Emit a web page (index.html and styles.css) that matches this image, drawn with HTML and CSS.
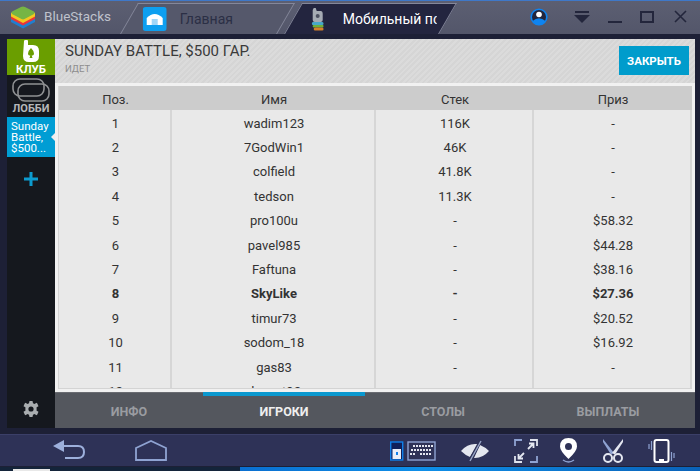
FILE: index.html
```html
<!DOCTYPE html>
<html lang="ru">
<head>
<meta charset="utf-8">
<title>BlueStacks</title>
<link rel="stylesheet" href="styles.css">
</head>
<body>
<div class="window">
  <header class="titlebar">
    <svg class="logo" width="26" height="24" viewBox="0 0 26 24">
      <path d="M1 13 13 19 25 13V17L13 23.500 1 17Z" fill="#1f7fd0"/>
      <path d="M1 10 13 16 25 10V14L13 20.500 1 14Z" fill="#e8353a"/>
      <path d="M1 7.500 13 14 25 7.500V11.500L13 18 1 11.500Z" fill="#f3c81f"/>
      <path d="M13 1.500Q14 1.500 15 2L24 6.500Q25.500 7.500 24 9L14.500 14Q13 14.800 11.500 14L2 9Q.5 7.500 2 6.500L11 2Q12 1.500 13 1.500Z" fill="#76b544"/>
    </svg>
    <span class="brand">BlueStacks</span>
    <div class="tabs">
      <div class="tab">
        <div class="tab-inner">
          <svg class="home-app" width="24" height="24" viewBox="0 0 24 24">
            <rect width="24" height="24" rx="3" fill="#0d9ff0"/>
            <path d="M4 11Q12 3 20 11V18H4Z" fill="#fff"/>
            <rect x="9" y="12" width="6" height="6" fill="#9fd6f8"/>
          </svg>
          <span class="tab-label">Главная</span>
        </div>
      </div>
      <div class="tab tab-active">
        <div class="tab-inner">
          <svg class="game-app" width="12" height="24" viewBox="0 0 12 24">
            <path d="M2 1H4L5 4H9Q11 4 11 7V13Q11 15 9 15H3Q1 15 1 13V3Z" fill="#a5abb3"/>
            <rect x="4" y="7" width="4" height="4" rx="2" fill="#4b5060"/>
            <rect x="0" y="15" width="12" height="3" rx="1.500" fill="#48a8c8"/>
            <rect x="1" y="18" width="11" height="2.500" rx="1" fill="#6fb03c"/>
            <rect x="2" y="20.500" width="10" height="3" rx="1.500" fill="#d5802a"/>
          </svg>
          <span class="tab-label">Мобильный пс</span>
        </div>
      </div>
    </div>
    <div class="window-controls">
      <svg width="18" height="18" viewBox="0 0 18 18">
        <circle cx="9" cy="9" r="7.800" fill="#23263c" stroke="#0f84f0" stroke-width="1.600"/>
        <circle cx="9" cy="6.500" r="2.800" fill="#fff"/>
        <path d="M2.500 13Q9 7.500 15.500 13Q13 17 9 17Q5 17 2.500 13Z" fill="#0f84f0"/>
      </svg>
      <svg class="ctl-menu" width="16" height="12" viewBox="0 0 16 12">
        <rect x="1" width="14" height="2" fill="#23263c"/>
        <path d="M0 4H16L8 12Z" fill="#23263c"/>
      </svg>
      <svg class="ctl-min" width="14" height="14" viewBox="0 0 14 14"><rect y="11" width="14" height="2" fill="#23263c"/></svg>
      <svg class="ctl-max" width="14" height="12" viewBox="0 0 14 12"><rect x="1" y="1" width="12" height="10" fill="none" stroke="#23263c" stroke-width="2"/></svg>
      <svg class="ctl-close" width="13" height="13" viewBox="0 0 13 13"><path d="M1 1 12 12M12 1 1 12" stroke="#23263c" stroke-width="1.600"/></svg>
    </div>
  </header>

  <div class="frame">
    <aside class="sidebar">
      <div class="side-club">
        <svg width="16" height="22" viewBox="0 0 16 22">
          <path d="M1 1Q1 0 2.500 0H4Q5 0 5 1V5H10Q16 5 16 11V16Q16 22 10 22H6Q0 22 0 16Z" fill="#fff"/>
          <path d="M8 8Q11 11 11 13.500Q11 16 8.700 15.500L9.500 18H6.500L7.300 15.500Q5 16 5 13.500Q5 11 8 8Z" fill="#6a9e00"/>
        </svg>
        <span>КЛУБ</span>
      </div>
      <div class="side-lobby">
        <svg width="38" height="24" viewBox="0 0 38 24" fill="none" stroke="#8f9193" stroke-width="1.600">
          <rect x="1" y="1" width="31" height="17" rx="7"/>
          <rect x="6" y="6" width="31" height="17" rx="7"/>
        </svg>
        <span>ЛОББИ</span>
      </div>
      <div class="side-active">Sunday Battle, $500...</div>
      <svg class="side-plus" width="14" height="14" viewBox="0 0 14 14"><path d="M5.500 0H8.500V5.500H14V8.500H8.500V14H5.500V8.500H0V5.500H5.500Z" fill="#0c9bcf"/></svg>
      <svg class="side-gear" width="16" height="16" viewBox="0 0 16 16">
        <path fill-rule="evenodd" fill="#a9adb0" d="M6.500 0H9.500L10 2.200 11.500 2.900 13.500 1.700 14.300 2.500 15.500 5.200 13.600 6.300V9.700L15.500 10.800 14.300 13.500 13.500 14.300 11.500 13.100 10 13.800 9.500 16H6.500L6 13.800 4.500 13.100 2.500 14.300 1.700 13.500 .5 10.800 2.400 9.700V6.300L.5 5.200 1.700 2.500 2.500 1.700 4.500 2.900 6 2.200ZM8 5.400A2.600 2.600 0 1 0 8 10.600 2.600 2.600 0 1 0 8 5.400Z"/>
      </svg>
    </aside>

    <main class="content">
      <div class="content-head">
        <div>
          <h1 class="event-title">SUNDAY BATTLE, $500 ГАР.</h1>
          <div class="event-status">ИДЕТ</div>
        </div>
        <button class="close-btn">ЗАКРЫТЬ</button>
      </div>
      <div class="table-panel">
        <div class="table">
          <div class="row row-head"><div>Поз.</div><div>Имя</div><div>Стек</div><div>Приз</div></div>
          <div class="row"><div>1</div><div>wadim123</div><div>116K</div><div>-</div></div>
          <div class="row"><div>2</div><div>7GodWin1</div><div>46K</div><div>-</div></div>
          <div class="row"><div>3</div><div>colfield</div><div>41.8K</div><div>-</div></div>
          <div class="row"><div>4</div><div>tedson</div><div>11.3K</div><div>-</div></div>
          <div class="row"><div>5</div><div>pro100u</div><div>-</div><div>$58.32</div></div>
          <div class="row"><div>6</div><div>pavel985</div><div>-</div><div>$44.28</div></div>
          <div class="row"><div>7</div><div>Faftuna</div><div>-</div><div>$38.16</div></div>
          <div class="row row-me"><div>8</div><div>SkyLike</div><div>-</div><div>$27.36</div></div>
          <div class="row"><div>9</div><div>timur73</div><div>-</div><div>$20.52</div></div>
          <div class="row"><div>10</div><div>sodom_18</div><div>-</div><div>$16.92</div></div>
          <div class="row"><div>11</div><div>gas83</div><div>-</div><div>-</div></div>
          <div class="row"><div>12</div><div>decent92</div><div>-</div><div>-</div></div>
        </div>
      </div>
      <nav class="bottom-tabs">
        <div class="btab">ИНФО</div>
        <div class="btab btab-active">ИГРОКИ</div>
        <div class="btab">СТОЛЫ</div>
        <div class="btab">ВЫПЛАТЫ</div>
      </nav>
    </main>
  </div>

  <footer class="navbar">
    <svg class="nav-back" width="33" height="22" viewBox="0 0 33 22" fill="none">
      <path d="M0 6 11 0V12Z" fill="#9db0dc"/>
      <path d="M10 6H25Q31 6 31 12T25 18H12" stroke="#9db0dc" stroke-width="2"/>
    </svg>
    <svg class="nav-home" width="32" height="21" viewBox="0 0 32 21" fill="none"><path d="M1 8 16 1 31 8V20H1Z" stroke="#8fa3d2" stroke-width="1.800"/></svg>
    <div class="nav-tools">
      <svg class="tool-kb" width="46" height="20" viewBox="0 0 46 20">
        <rect x=".7" y="1" width="12" height="18" fill="#10205a" stroke="#0f7fe8" stroke-width="1.400"/>
        <rect x="2.500" y="8" width="8.500" height="10" fill="#e8eef8"/>
        <rect x="6" y="11" width="2" height="3" fill="#0f7fe8"/>
        <rect x="18" y="1" width="27" height="18" fill="none" stroke="#8fa3d2" stroke-width="1.400"/>
        <path d="M24 5h20M22 9h21M21 13h6M31 13h12" stroke="#e4e7f0" stroke-width="2.200" stroke-dasharray="2 1" transform="translate(-1 0)"/>
      </svg>
      <svg class="tool-eye" width="28" height="24" viewBox="0 0 28 24">
        <path d="M0 12Q6 5 14 5L17 5 9 18Q4 16 0 12ZM19 6Q24 8 28 12 22 19 14 19H13Z" fill="#e4e7ef"/>
        <path d="M20 1 8 23" stroke="#2e3257" stroke-width="3"/>
        <path d="M20 2 9 22" stroke="#9aa7c8" stroke-width="1.400"/>
      </svg>
      <svg class="tool-full" width="24" height="24" viewBox="0 0 24 24" fill="none">
        <path d="M1 7V1H8M16 23H23V17" stroke="#8fa3d2" stroke-width="1.800"/>
        <path d="M1 17V23H8M16 1H23V7" stroke="#dfe3ee" stroke-width="1.800"/>
        <path d="M14 10 19 5M15 4.500H19.500V9M10 14 5 19M4.500 15V19.500H9" stroke="#e4e7f0" stroke-width="1.800"/>
      </svg>
      <svg class="tool-pin" width="20" height="26" viewBox="0 0 20 26">
        <path fill-rule="evenodd" fill="#fff" d="M9.500 0Q18 0 18 8.500 18 13 9.500 21 1 13 1 8.500 1 0 9.500 0ZM9.500 5A3.500 3.500 0 1 0 9.500 12 3.500 3.500 0 1 0 9.500 5Z"/>
        <path d="M4 22Q9.500 26 15 22" fill="none" stroke="#8fa3d2" stroke-width="1.400"/>
      </svg>
      <svg class="tool-scissors" width="22" height="24" viewBox="0 0 22 24" fill="none">
        <path d="M1 0 12 14 9 15.500 1 3Z" fill="#8fa3d2"/>
        <path d="M21 0 10 14 13 15.500 21 3Z" fill="#e4e7f0"/>
        <circle cx="6" cy="19" r="4" stroke="#e4e7f0" stroke-width="2"/>
        <circle cx="16" cy="19" r="4" stroke="#e4e7f0" stroke-width="2"/>
      </svg>
      <svg class="tool-phone" width="27" height="24" viewBox="0 0 27 24" fill="none">
        <rect x="6.500" y="1" width="14" height="22" rx="2" stroke="#fff" stroke-width="2"/>
        <rect x="11" y="20" width="5" height="2" fill="#fff"/>
        <path d="M3.500 2V11M1 5V10M23.500 13V22M26 14V19" stroke="#8fa3d2" stroke-width="1.200"/>
      </svg>
    </div>
  </footer>
  <div class="taskbar"><div class="task-thumb"></div></div>
</div>
</body>
</html>
```

FILE: styles.css
```css
* { box-sizing: border-box; }

html, body {
  margin: 0;
  height: 100%;
  overflow: hidden;
}

body {
  font-family: Roboto, "Liberation Sans", sans-serif;
  background: #1c1f36;
}

.window {
  display: flex;
  flex-direction: column;
  width: 700px;
  height: 471px;
  background: #1d2036;
}

/* title bar */
.titlebar {
  display: flex;
  align-items: center;
  flex: 0 0 35px;
  padding-left: 10px;
  background: linear-gradient(#5c5f72, #53566a);
  border-top: 1px solid #3f78c8;
  border-bottom: 1px solid #1d2036;
  overflow: hidden;
}

.logo { flex: none; margin-top: -2px; }

.brand {
  margin-left: 8px;
  width: 79px;
  color: #bfc2cc;
  font-size: 13.500px;
  margin-top: -3px;
}

.tabs {
  display: flex;
  align-self: flex-end;
  height: 31px;
  margin-left: 6px;
}

.tab {
  width: 157px;
  height: 31px;
  transform: skewX(-30deg);
  border: 1px solid #84879a;
  border-bottom: 0;
  background: #55586b;
}

.tab-active {
  width: 155px;
  margin-left: 7px;
  background: #23253f;
}

.tab-inner {
  display: flex;
  align-items: center;
  height: 100%;
  padding-left: 13px;
  transform: skewX(30deg);
  overflow: hidden;
}

.tab-active .tab-inner { padding-left: 18px; }

.home-app { flex: none; }
.game-app { flex: none; }

.tab-label {
  margin-left: 13px;
  color: #2b2f45;
  font-size: 14px;
  white-space: nowrap;
}

.tab-active .tab-label {
  margin-left: 19px;
  max-width: 94px;
  overflow: hidden;
  color: #fff;
}

.window-controls {
  display: flex;
  align-items: center;
  margin-left: auto;
  margin-top: -2px;
  padding-right: 13px;
}

.ctl-menu { margin-left: 26px; }
.ctl-min { margin-left: 18px; }
.ctl-max { margin-left: 18px; }
.ctl-close { margin-left: 20px; }

/* main frame */
.frame {
  display: flex;
  flex: 0 0 399px;
  padding: 4px 5px 6px 7px;
}

.sidebar {
  display: flex;
  flex-direction: column;
  align-items: center;
  flex: 0 0 48px;
  background: #15181e;
}

.side-club {
  display: flex;
  flex-direction: column;
  align-items: center;
  justify-content: space-between;
  width: 100%;
  height: 36px;
  padding-top: 1px;
  background: #6a9e00;
  color: #fff;
  font-size: 11.500px;
  font-weight: 700;
  line-height: 12px;
}

.side-lobby {
  display: flex;
  flex-direction: column;
  align-items: center;
  width: 100%;
  height: 42px;
  padding-top: 3px;
  color: #b5b7b9;
  font-size: 11px;
  font-weight: 700;
  line-height: 12px;
}

.side-lobby span { margin-top: 1px; }

.side-active {
  position: relative;
  width: 100%;
  height: 40px;
  padding: 4px 0 0 4px;
  background: #009dd4;
  color: #fff;
  font-size: 11.500px;
  line-height: 11px;
}

.side-active::after {
  content: "";
  position: absolute;
  right: 0;
  top: 16px;
  border: 4px solid transparent;
  border-right-color: #eee;
  border-left: 0;
}

.side-plus { margin-top: 15px; }

.side-gear { margin-top: auto; margin-bottom: 11px; }

.content {
  display: flex;
  flex-direction: column;
  flex: 1;
  min-width: 0;
}

.content-head {
  display: flex;
  align-items: flex-start;
  justify-content: space-between;
  flex: 0 0 44px;
  padding: 4px 6px 0 10px;
  background: repeating-linear-gradient(135deg, #dbdbdb 0 2px, #d5d5d5 2px 4px);
}

.event-title {
  margin: 0;
  color: #3a3a3a;
  font-size: 15px;
  font-weight: 400;
  line-height: 17px;
}

.event-status {
  margin-top: 3px;
  color: #8d8d8d;
  font-size: 9.500px;
  line-height: 11px;
}

.close-btn {
  width: 70px;
  height: 29px;
  margin-top: 3px;
  padding: 0;
  border: 0;
  background: #009ccc;
  color: #fff;
  font-family: inherit;
  font-size: 11.500px;
  font-weight: 700;
}

.table-panel {
  flex: 0 0 309px;
  padding: 3px;
  background: #f1f1f1;
  overflow: hidden;
}

.table {
  height: 303px;
  overflow: hidden;
  border-left: 1px solid #d4d4d4;
  border-bottom: 1px solid #d4d4d4;
  background: #e9e9e9;
}

.row {
  display: grid;
  grid-template-columns: 113px 204px 158px 158px;
  height: 24.400px;
  color: #333;
  font-size: 13px;
  text-align: center;
}

.row > div {
  padding: 3.600px 0 0 2px;
  line-height: 20.800px;
  border-right: 2px solid #d6d6d6;
}

.row-head {
  height: 24px;
  background: #cccccc;
}

.row-head > div {
  padding: 3px 0 0;
  line-height: 21px;
  border-right: 0;
}

.row-me { font-weight: 700; }

.bottom-tabs {
  display: grid;
  grid-template-columns: 148px 162px 156px 174px;
  flex: 1;
  background: #54575e;
  border-top: 1px solid #6a6c72;
}

.btab {
  padding-top: 11px;
  color: #9a9ca1;
  font-size: 12.500px;
  font-weight: 700;
  text-align: center;
}

.btab-active {
  margin-top: -1px;
  border-top: 4px solid #0a98cf;
  padding-top: 8px;
  color: #eeeeee;
}

/* android nav bar */
.navbar {
  display: flex;
  align-items: center;
  flex: 0 0 33px;
  padding: 0 0 0 53px;
  background: #2e3257;
  border-top: 1px solid #3b3f68;
  border-bottom: 1px solid #1d2036;
}

.nav-home { margin-left: 49px; }

.nav-tools {
  display: flex;
  align-items: center;
  margin-left: auto;
  padding-right: 25px;
}

.tool-eye { margin-left: 25px; }
.tool-full { margin-left: 25px; }
.tool-pin { margin-left: 21px; }
.tool-scissors { margin-left: 23px; }
.tool-phone { margin-left: 24px; }

.taskbar {
  display: flex;
  align-items: flex-end;
  flex: 1;
  padding-left: 13px;
  background: linear-gradient(90deg, #14243a 0 240px, #0a6fd0 240px, #0f8fe8 60%, #0a62b8);
}

.task-thumb {
  width: 37px;
  height: 2px;
  background: #e8e8e8;
}
```
